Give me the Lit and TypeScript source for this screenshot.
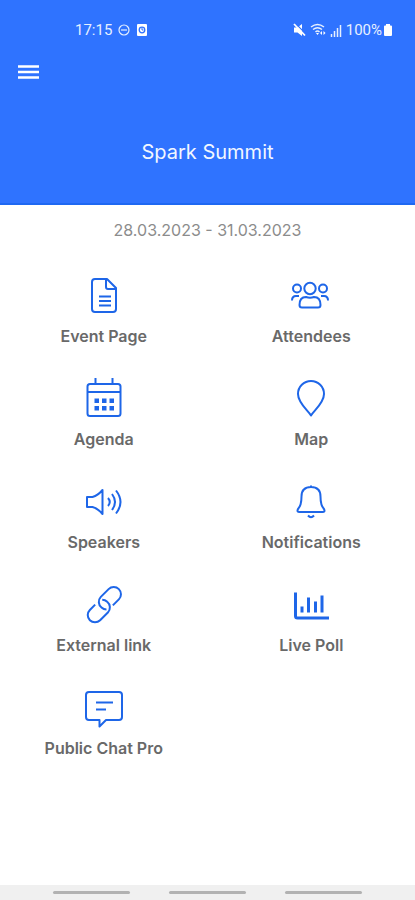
import { LitElement, html, svg, css } from "lit";
import { customElement } from "lit/decorators.js";

const icons = {
  page: svg`
    <path d="M11 3H23L32 12V33Q32 36 29 36H11Q8 36 8 33V6Q8 3 11 3Z"/>
    <path d="M22 3V11Q22 13 24 13H32"/>
    <path d="M15 20.500H27M15 25H27M15 29.500H27"/>`,
  people: svg`
    <circle cx="19" cy="12.500" r="5.700"/>
    <circle cx="6" cy="12.500" r="4"/>
    <circle cx="32" cy="12.500" r="4"/>
    <path d="M11 31.500H27Q29.500 31.500 29.500 29C29.500 24 27 21 23 21Q19 22.500 15 21C11 21 8.500 24 8.500 29Q8.500 31.500 11 31.500Z"/>
    <path d="M1 24.500Q1 20 5 20H8M37 24.500Q37 20 33 20H30"/>`,
  calendar: svg`
    <rect x="3.500" y="5" width="33" height="32" rx="2.500"/>
    <path d="M3.500 13H36.500M11.500 5V-1M28.500 5V-1"/>
    <path class="solid" d="M10.500 19.500h4.500v4.500h-4.500zM18 19.500h4.500v4.500h-4.500zM25.500 19.500h4.500v4.500h-4.500zM10.500 27h4.500v4.500h-4.500zM18 27h4.500v4.500h-4.500zM25.500 27h4.500v4.500h-4.500z"/>`,
  pin: svg`<path d="M20 36.500C17 31.500 7 24 7 15A13 13 0 0 1 33 15C33 24 23 31.500 20 36.500Z"/>`,
  speaker: svg`
    <path d="M3 15H8.500Q14 13.500 18.500 8V32Q14 26.500 8.500 25H3Z"/>
    <path d="M24 16Q27.500 20 24 24M28 12Q34 20 28 28M32 8.500Q41 20 32 31.500"/>`,
  bell: svg`
    <path d="M20 3.500V5M20 5C13.500 5 10.500 9 10.500 14.500C10.500 21.500 9.500 24.500 7 27Q5.500 30 8.500 30H31.500Q34.500 30 33 27C30.500 24.500 29.500 21.500 29.500 14.500C29.500 9 26.500 5 20 5Z"/>
    <path d="M17 33.500Q20 37 23 33.500"/>`,
  link: svg`
    <g transform="rotate(-45 20 20)">
      <path d="M14 13.500H6.500A7.200 7.200 0 0 0 6.500 28H17.500A7.200 7.200 0 0 0 24.500 20Q24.500 17 22.500 15"/>
      <path d="M26 26.500H34.500A7.200 7.200 0 0 0 34.500 12H23.500A7.200 7.200 0 0 0 16.500 20Q16.500 23 18.500 25"/>
    </g>`,
  chart: svg`
    <path class="bold" d="M4.500 7.500V31Q4.500 33 6.500 33H38"/>
    <path class="bold" d="M11 21.500V27.500M17.500 12.500V27.500M24.500 16.500V27.500M31 10.500V27.500"/>`,
  chat: svg`
    <path d="M5 4H35Q38 4 38 7V29Q38 32 35 32H22L15.500 38.500V32H5Q2 32 2 29V7Q2 4 5 4Z"/>
    <path d="M12 14.500H29M12 21.500H22"/>`,
};

const entries: { icon: keyof typeof icons; label: string }[] = [
  { icon: "page", label: "Event Page" },
  { icon: "people", label: "Attendees" },
  { icon: "calendar", label: "Agenda" },
  { icon: "pin", label: "Map" },
  { icon: "speaker", label: "Speakers" },
  { icon: "bell", label: "Notifications" },
  { icon: "link", label: "External link" },
  { icon: "chart", label: "Live Poll" },
  { icon: "chat", label: "Public Chat Pro" },
];

@customElement("status-bar")
export class StatusBar extends LitElement {
  static styles = css`
    :host {
      display: flex;
      justify-content: space-between;
      align-items: center;
      height: 20px;
      padding: 20px 22px 0 75px;
      color: #e6f0ff;
      font: 15px/20px Roboto, sans-serif;
    }
    .group {
      display: flex;
      align-items: center;
      gap: 6px;
    }
    .tight {
      gap: 4px;
    }
    .battery {
      display: flex;
      align-items: center;
      gap: 1px;
    }
    svg {
      display: block;
      fill: none;
      stroke: currentColor;
    }
    .fill {
      fill: #fff;
      stroke: none;
    }
  `;

  render() {
    return html`
      <div class="group">
        <span>17:15</span>
        <svg width="12" height="12" viewBox="0 0 12 12" stroke-width="1.200" aria-hidden="true">
          <circle cx="6" cy="6" r="5" /><path d="M3 6H9" />
        </svg>
        <svg width="12" height="14" viewBox="0 0 12 14" aria-hidden="true">
          <rect class="fill" x="1" y="1" width="10" height="12" rx="1" />
          <circle cx="6" cy="7" r="2.800" stroke="#2f73ff" stroke-width="1.300" />
          <path d="M6 5V7H7.500" stroke="#2f73ff" />
        </svg>
      </div>
      <div class="group tight">
        <svg width="13" height="14" viewBox="0 0 13 14" aria-hidden="true">
          <path class="fill" d="M1 4.500H4.500L9 1V13L4.500 9.500H1Z" />
          <path d="M2.500 0.500L13 11" stroke="#2f73ff" stroke-width="1.200" />
          <path d="M1 1L12 12.500" stroke="#fff" stroke-width="1.800" />
        </svg>
        <svg width="16" height="14" viewBox="0 0 16 14" stroke-width="1.500" aria-hidden="true">
          <path d="M1 4Q7.500-1 14 4M3 6.500Q7.500 3 12 6.500M5.500 9Q7.500 7 9.500 9" />
          <path class="fill" d="M6 10H9L7.500 12ZM10 10L12 8V12ZM15.500 10L13.500 12V8Z" />
        </svg>
        <svg width="12" height="13" viewBox="0 0 12 13" stroke-width="1.500" aria-hidden="true">
          <path d="M1.500 10V13M4.500 7V13M7.500 4V13M10.500 1V13" />
        </svg>
        <span class="battery">
          <span>100%</span>
          <svg width="10" height="14" viewBox="0 0 10 14" aria-hidden="true">
            <path class="fill" d="M3 1H7V2.500H8Q9 2.500 9 3.500V12Q9 13 8 13H2Q1 13 1 12V3.500Q1 2.500 2 2.500H3Z" />
          </svg>
        </span>
      </div>
    `;
  }
}

@customElement("app-root")
export class AppRoot extends LitElement {
  static styles = css`
    :host {
      display: flex;
      flex-direction: column;
      min-height: 100vh;
      background: #fff;
      font-family: Inter, "Liberation Sans", sans-serif;
    }
    header {
      background: #2f73ff;
      border-bottom: 2px solid #1f68f2;
      color: #f2f7ff;
    }
    .menu {
      display: block;
      margin: 20px 0 0 14px;
      padding: 4px;
      border: 0;
      background: none;
      color: #fff;
    }
    .menu svg {
      display: block;
      stroke: currentColor;
    }
    h1 {
      margin: 54px 0 0;
      padding-bottom: 37px;
      font-size: 20px;
      line-height: 28px;
      font-weight: 400;
      text-align: center;
    }
    .dates {
      margin: 0;
      padding-top: 13px;
      color: #8c8c8c;
      font-size: 16px;
      line-height: 24px;
      text-align: center;
    }
    main {
      flex: 1;
    }
    .grid {
      display: grid;
      grid-template-columns: 1fr 1fr;
      row-gap: 32px;
      margin-top: 34px;
      padding-bottom: 32px;
    }
    .entry {
      display: flex;
      flex-direction: column;
      align-items: center;
      gap: 9px;
      padding: 0;
      border: 0;
      background: none;
      color: #696969;
      font: inherit;
      font-size: 16px;
      line-height: 22px;
      font-weight: 600;
    }
    .entry svg {
      display: block;
      overflow: visible;
      fill: none;
      stroke: #1e66e8;
      stroke-width: 2;
      stroke-linejoin: round;
    }
    .entry .solid {
      fill: #1e66e8;
      stroke: none;
    }
    .entry .bold {
      stroke-width: 3;
    }
    footer {
      display: flex;
      justify-content: center;
      gap: 39px;
      padding: 6px 0;
      background: #f0f0f0;
    }
    .key {
      width: 77px;
      height: 3px;
      border-radius: 2px;
      background: #b2b2b2;
    }
  `;

  render() {
    return html`
      <header>
        <status-bar></status-bar>
        <button class="menu" aria-label="Open menu">
          <svg width="21" height="16" viewBox="0 0 21 16" aria-hidden="true">
            <path d="M0 2.500H21M0 8H21M0 13.500H21" stroke-width="2.400" />
          </svg>
        </button>
        <h1>Spark Summit</h1>
      </header>
      <main>
        <p class="dates">28.03.2023 - 31.03.2023</p>
        <nav class="grid" aria-label="Event">
          ${entries.map(
            (e) => html`
              <button class="entry">
                <svg width="40" height="40" viewBox="0 0 40 40" aria-hidden="true">${icons[e.icon]}</svg>
                <span>${e.label}</span>
              </button>
            `
          )}
        </nav>
      </main>
      <footer>
        <span class="key"></span>
        <span class="key"></span>
        <span class="key"></span>
      </footer>
    `;
  }
}
